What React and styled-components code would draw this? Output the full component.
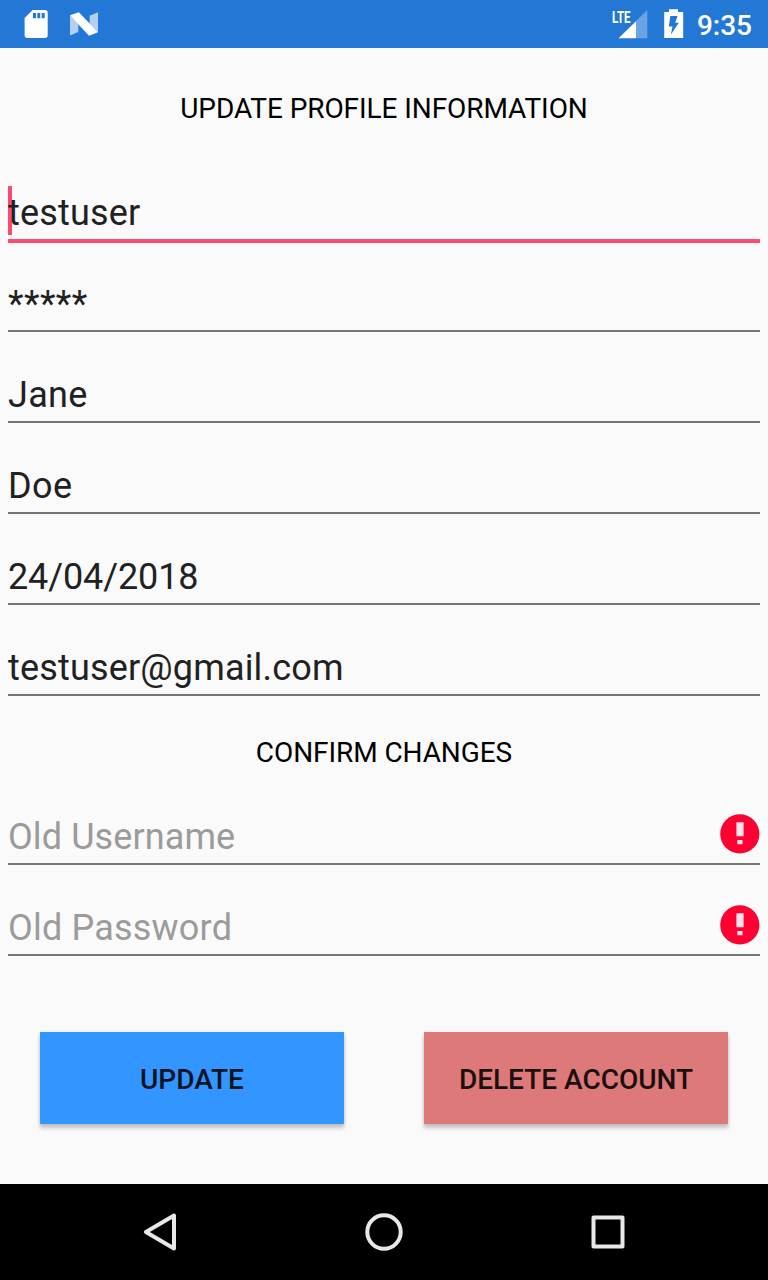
import React from "react";
import styled, { createGlobalStyle } from "styled-components";

const GlobalStyle = createGlobalStyle`
  * { box-sizing: border-box; }
  body { margin: 0; background: #fafafa; font-family: Roboto, sans-serif; }
`;

const Screen = styled.div`
  width: 768px;
  height: 1280px;
  display: flex;
  flex-direction: column;
  background: #fafafa;
  overflow: hidden;
`;

const StatusBar = styled.header`
  height: 48px;
  flex: none;
  display: flex;
  align-items: center;
  justify-content: space-between;
  padding: 0 16px 0 20px;
  background: #2478d5;
  color: #fff;
`;

const StatusGroup = styled.div`
  display: flex;
  align-items: center;
  gap: 16px;
`;

const Clock = styled.time`
  margin-left: -3px;
  padding-top: 3px;
  font-size: 28px;
  line-height: 33px;
  font-weight: 500;
`;

const Content = styled.main`
  flex: 1;
  padding: 44px 8px 0;
`;

const Heading = styled.h1`
  margin: 0;
  font-size: 28px;
  line-height: 33px;
  font-weight: 400;
  letter-spacing: -0.08px;
  text-align: center;
  color: #000;
`;

const FieldList = styled.div`
  display: flex;
  flex-direction: column;
  gap: 38px;
  padding: ${(p) => p.$padding};
`;

const Field = styled.div`
  position: relative;
  height: 53px;
  display: flex;
  justify-content: space-between;
  font-size: 36px;
  color: ${(p) => (p.$hint ? "#9b9b9b" : "#212121")};

  &::after {
    content: "";
    position: absolute;
    left: 0;
    top: 53px;
    width: 100%;
    height: ${(p) => (p.$focused ? "4px" : "2px")};
    background: ${(p) => (p.$focused ? "#fa4b72" : "#757575")};
  }
`;

const Value = styled.span`
  position: relative;
  line-height: 55px;
  letter-spacing: ${(p) => p.$tracking}px;
`;

const Caret = styled.i`
  position: absolute;
  left: 0;
  top: 0;
  width: 4px;
  height: 49px;
  background: #fa4b72;
`;

const Actions = styled.div`
  display: flex;
  gap: 80px;
  padding: 78px 32px 0;
`;

const Button = styled.button`
  flex: 1;
  height: 92px;
  border: 0;
  padding: 3px 0 0;
  background: ${(p) => p.$color};
  color: ${(p) => p.$ink};
  font: 500 28px/33px Roboto, sans-serif;
  white-space: nowrap;
  box-shadow: 0 4px 4px rgba(0, 0, 0, 0.22), 0 0 3px rgba(0, 0, 0, 0.1);
`;

const NavBar = styled.nav`
  height: 96px;
  flex: none;
  display: flex;
  align-items: center;
  justify-content: space-between;
  padding: 0 136px;
  background: #000;
`;

function ErrorIcon() {
  return (
    <svg width="40" height="48" viewBox="0 0 40 48">
      <circle cx="19.8" cy="23.9" r="19.6" fill="#ff0033" />
      <path d="M16.4 12.2h7.2v14h-7.2zM17.3 30h5.2v4.3h-5.2z" fill="#fbe3ea" />
    </svg>
  );
}

function CardIcon() {
  return (
    <svg width="32" height="48" viewBox="0 0 32 48">
      <path fill="#fff" fillRule="evenodd" d="M12.7 10H25a2.7 2.7 0 0 1 2.7 2.7v22.6A2.7 2.7 0 0 1 25 38H7.3a2.7 2.7 0 0 1-2.7-2.7V18zM13 13v5.3h3V13zm4.3 0v5.3h3V13zm4.4 0v5.3h3V13z" />
    </svg>
  );
}

function NougatIcon() {
  return (
    <svg width="32" height="48" viewBox="0 0 32 48">
      <path fill="#b3d0f1" d="M2 15.3l8.3 8.5v8.3L2 35.6zM21.7 15.7l8.3-3.4v20l-8.3-8z" />
      <path fill="#fff" d="M2 15.3l8.8-3.1L30 32.3l-9 3.5z" />
    </svg>
  );
}

function SignalIcon() {
  return (
    <svg width="40" height="48" viewBox="0 0 40 48">
      <path fill="#6ba4e4" d="M39.3 10v28.3H27V22z" />
      <path fill="#fff" d="M28 21.3v17H10.5z" />
      <text x="4" y="22.7" fill="#fff" fontFamily="Roboto, sans-serif" fontSize="17" fontWeight="700" textLength="18.5" lengthAdjust="spacingAndGlyphs">LTE</text>
    </svg>
  );
}

function BatteryIcon() {
  return (
    <svg width="20" height="48" viewBox="0 0 20 48">
      <path fill="#fff" d="M5 9.2h9V12h5.2v26H.2V12H5z" />
      <path fill="#2478d5" d="M6.3 16h7.3l-2.4 6.8h3.6L6.8 34.8l1.7-8.3H4.8z" />
    </svg>
  );
}

const profile = [
  { value: "testuser", tracking: 0.17 },
  { value: "*****", tracking: 0.45 },
  { value: "Jane", tracking: 0.3 },
  { value: "Doe", tracking: 0.4 },
  { value: "24/04/2018", tracking: -0.12 },
  { value: "testuser@gmail.com", tracking: 0.17 },
];

const credentials = [
  { label: "Old Username", tracking: 0.1 },
  { label: "Old Password", tracking: 0.2 },
];

export default function App() {
  return (
    <>
      <GlobalStyle />
      <Screen>
        <StatusBar>
          <StatusGroup>
            <CardIcon />
            <NougatIcon />
          </StatusGroup>
          <StatusGroup>
            <SignalIcon />
            <BatteryIcon />
            <Clock>9:35</Clock>
          </StatusGroup>
        </StatusBar>

        <Content>
          <Heading>UPDATE PROFILE INFORMATION</Heading>
          <FieldList $padding="61px 0 42px">
            {profile.map(({ value, tracking }, i) => (
              <Field key={value} $focused={i === 0}>
                {i === 0 && <Caret />}
                <Value $tracking={tracking}>{value}</Value>
              </Field>
            ))}
          </FieldList>
          <Heading as="h2">CONFIRM CHANGES</Heading>
          <FieldList $padding="41px 0 0">
            {credentials.map(({ label, tracking }) => (
              <Field key={label} $hint>
                <Value $tracking={tracking}>{label}</Value>
                <ErrorIcon />
              </Field>
            ))}
          </FieldList>
          <Actions>
            <Button $color="#3395ff" $ink="#07131f">UPDATE</Button>
            <Button $color="#dd7979" $ink="#1b0f0f">DELETE ACCOUNT</Button>
          </Actions>
        </Content>

        <NavBar>
          <svg width="48" height="48" viewBox="0 0 48 48" fill="none" stroke="#e8e8e8" strokeWidth="4" strokeLinejoin="round">
            <path d="M9.9 24L38 7.5v33z" />
          </svg>
          <svg width="48" height="48" viewBox="0 0 48 48" fill="none" stroke="#e8e8e8" strokeWidth="4">
            <circle cx="24" cy="24" r="16.7" />
          </svg>
          <svg width="48" height="48" viewBox="0 0 48 48" fill="none" stroke="#e8e8e8" strokeWidth="4" strokeLinejoin="round">
            <path d="M9.5 9.5h29v29h-29z" />
          </svg>
        </NavBar>
      </Screen>
    </>
  );
}
